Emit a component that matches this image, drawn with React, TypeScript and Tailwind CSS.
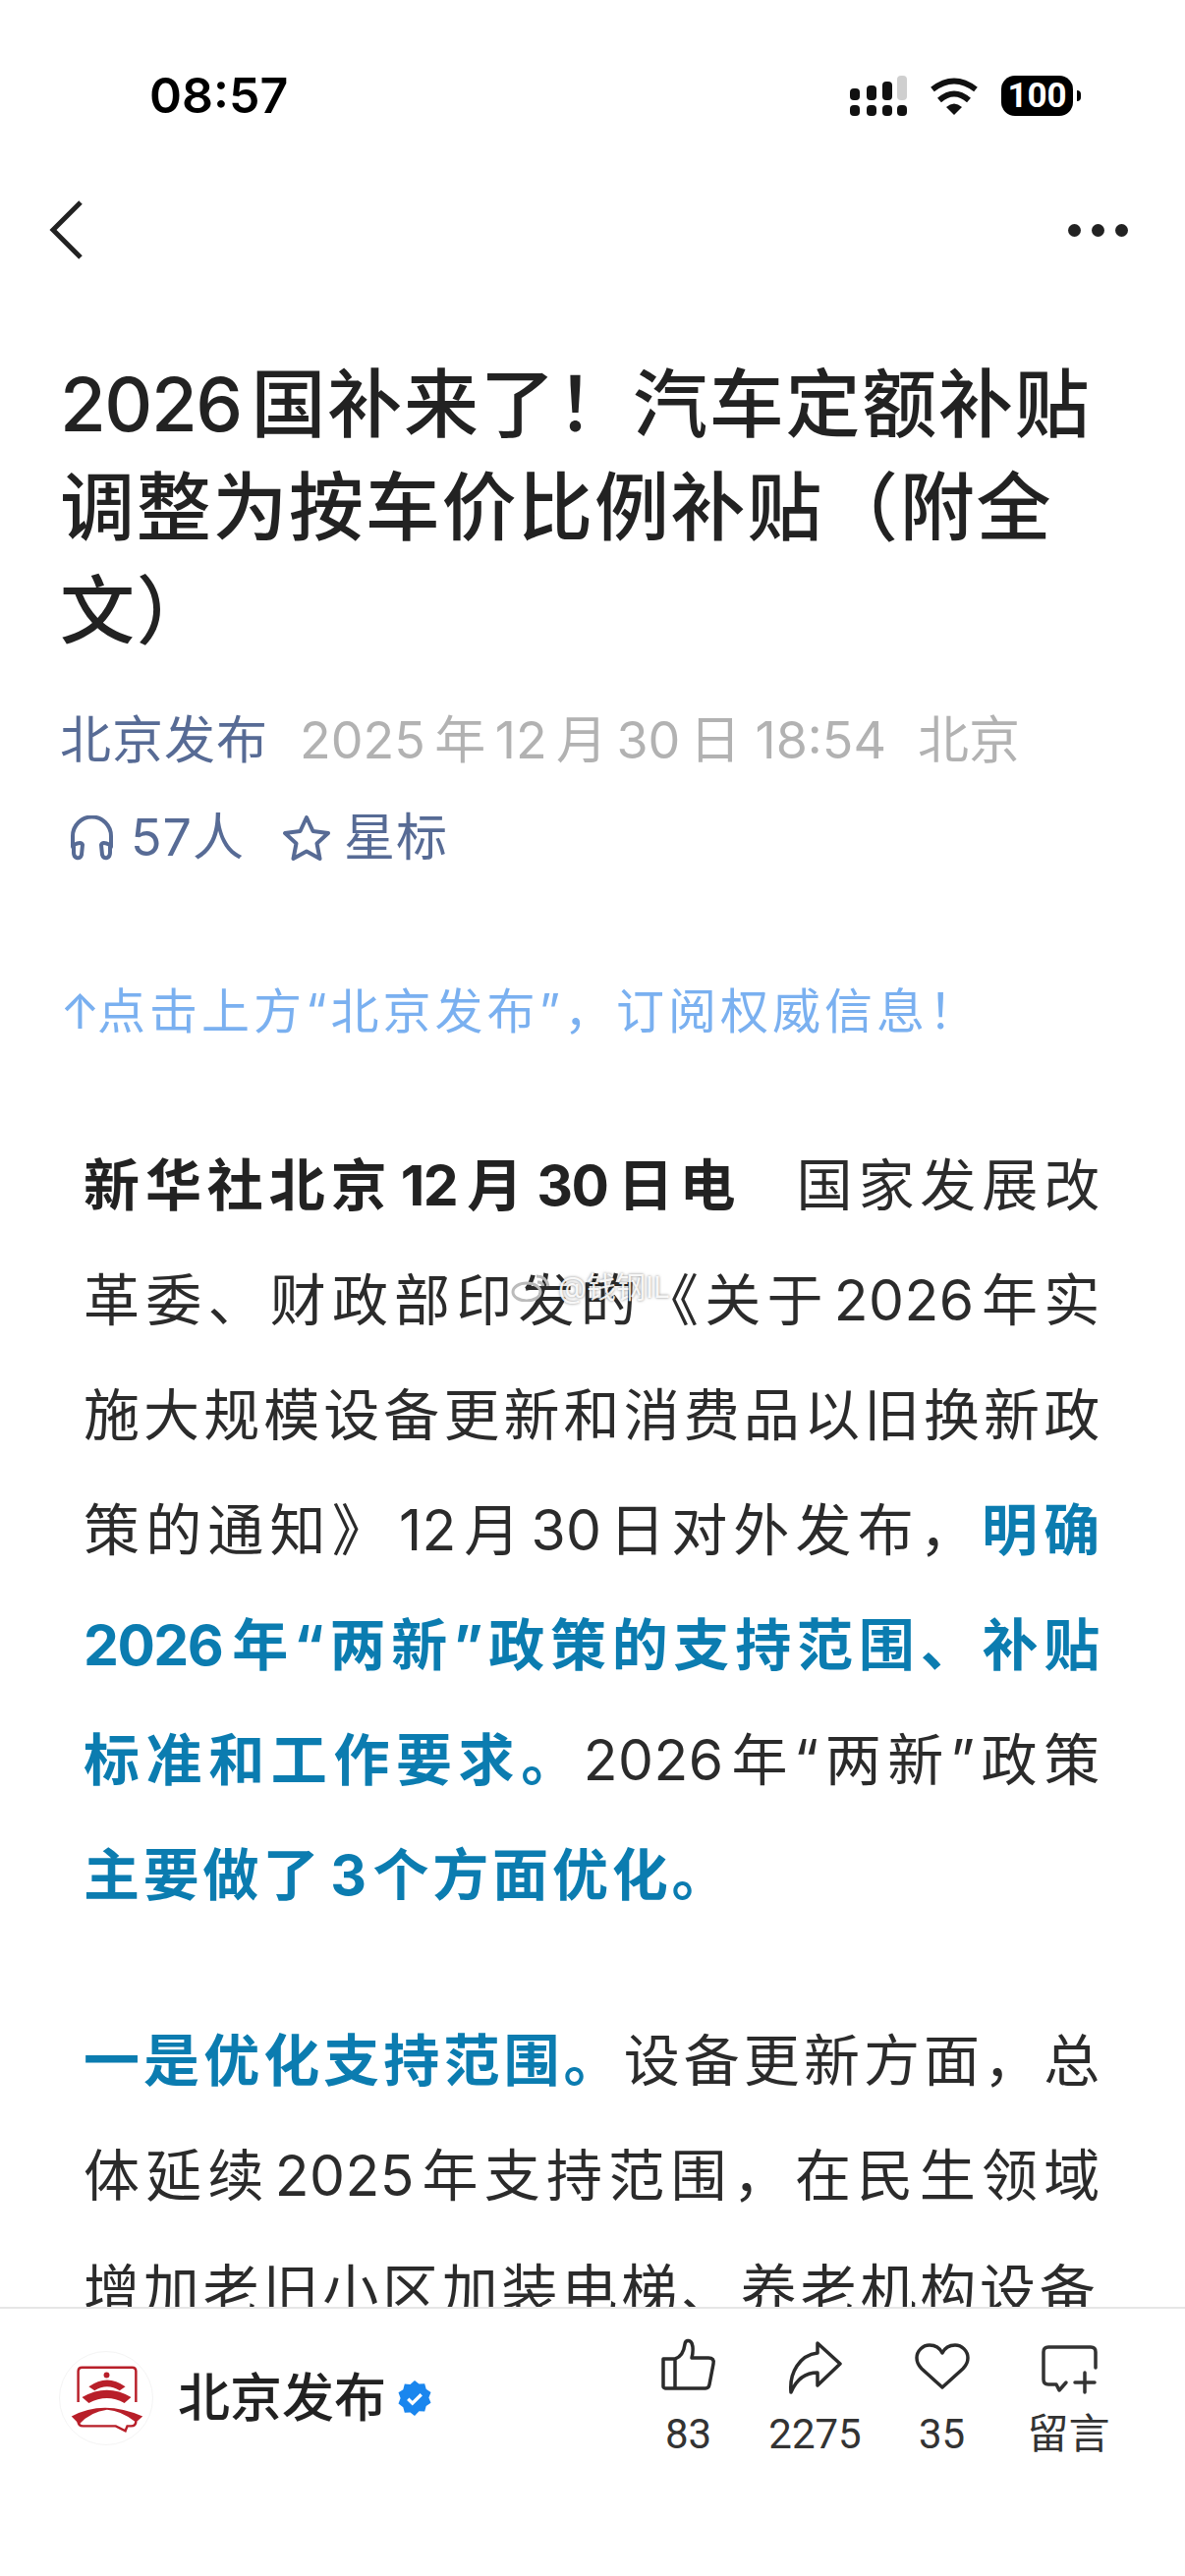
import React from "react";

const F = { fontFamily: '"Inter","Noto Sans CJK SC",sans-serif' };

function N({ children }: { children: React.ReactNode }) {
  return <span className="tracking-[0.500px] mx-[5px]">{children}</span>;
}
function B({ children }: { children: React.ReactNode }) {
  return <span className="tracking-[-1.500px] mx-[8px]">{children}</span>;
}

function Logo() {
  return (
    <div className="w-[96px] h-[96px] rounded-full border border-[#f4f4f4] shrink-0">
      <svg width="94" height="94" viewBox="0 0 96 96" fill="none">
        <path d="M19 52 V20 Q19 16 23 16 H75 Q79 16 79 20 V52" stroke="#b81f29" strokeWidth="2.500" />
        <path d="M19 72 Q19 77 24 77 H58 L68 82 L70 77 H74 Q79 77 79 72" stroke="#b81f29" strokeWidth="2.500" />
        <circle cx="48.500" cy="24" r="3" fill="#b81f29" />
        <path d="M30 36 Q49 22 68 36 L62 40 Q49 32 36 40 Z" fill="#b81f29" />
        <path d="M23 47 Q49 32 74 47 L67 53 Q49 43 30 53 Z" fill="#b81f29" />
        <path d="M12 67 Q45 49 86 67 L79 73 Q64 61 49 60 Q32 62 20 75 Z" fill="#b81f29" />
      </svg>
    </div>
  );
}

function Action({ icon, label }: { icon: React.ReactNode; label: string }) {
  return (
    <div className="w-[129px] flex flex-col items-center gap-[18px]">
      <div className="h-[60px] flex items-start justify-center">{icon}</div>
      <span className="text-[42px] leading-[44px] text-[#333]" style={{ fontFamily: '"Roboto","Noto Sans CJK SC",sans-serif' }}>{label}</span>
    </div>
  );
}

export default function App() {
  return (
    <div className="relative w-[1206px] h-[2622px] bg-white overflow-hidden flex flex-col text-[#222]" style={F}>
      <div className="h-[174px] shrink-0 flex items-start justify-between pl-[152px] pr-[106px] pt-[77px]">
        <span className="text-[50px] leading-[41px] font-semibold text-black">08:57</span>
        <div className="flex items-center h-[41px]">
          <svg width="58" height="41" viewBox="0 0 58 41" fill="#111">
            <rect x="0" y="13" width="10" height="12" rx="4" />
            <rect x="17" y="10" width="10" height="15" rx="4" />
            <rect x="33" y="6" width="10" height="19" rx="4" />
            <rect x="48" y="0" width="10" height="25" rx="4" fill="#cfcfcf" />
            <rect x="0" y="30" width="10" height="11" rx="4" />
            <rect x="17" y="30" width="10" height="11" rx="4" />
            <rect x="33" y="30" width="10" height="11" rx="4" />
            <rect x="48" y="30" width="10" height="11" rx="4" />
          </svg>
          <svg className="ml-[23px]" width="50" height="38" viewBox="0 0 50 38" fill="none" stroke="#111" strokeWidth="6">
            <path d="M3 12 Q25 -5 47 12" />
            <path d="M10 23 Q25 10 40 23" />
            <path d="M25 38 L17 30 Q25 23 33 30 Z" fill="#111" stroke="none" />
          </svg>
          <div className="ml-[23px] w-[73px] h-[41px] rounded-[14px] bg-black text-white text-[35px] leading-[41px] font-bold text-center" style={{ fontFamily: "Roboto,sans-serif" }}>100</div>
          <div className="ml-[4px] w-[4px] h-[11px] rounded-r-full bg-black" />
        </div>
      </div>

      <div className="h-[120px] shrink-0 flex items-center justify-between pl-[50px] pr-[58px]">
        <svg width="34" height="60" viewBox="0 0 34 60" fill="none" stroke="#222" strokeWidth="5">
          <path d="M32 2 L4 30 L32 58" />
        </svg>
        <div className="flex gap-[11px]">
          <span className="w-[13px] h-[13px] rounded-full bg-[#222]" />
          <span className="w-[13px] h-[13px] rounded-full bg-[#222]" />
          <span className="w-[13px] h-[13px] rounded-full bg-[#222]" />
        </div>
      </div>

      <div className="pl-[61px] pr-[62px] pt-[65px]">
        <h1 className="text-[76px] leading-[105px] font-medium tracking-[1.700px] text-[#222]"><span className="tracking-[-1.500px] mr-[10px]">2026</span>国补来了！汽车定额补贴调整为按车价比例补贴（附全文）</h1>
        <div className="mt-[50px] text-[52px] leading-[60px] flex gap-[32px] whitespace-nowrap">
          <span className="text-[#576b95] tracking-[1px]">北京发布</span>
          <span className="text-[#b2b2b2]">2025&thinsp;年&thinsp;12&thinsp;月&thinsp;30&thinsp;日 18:54</span>
          <span className="text-[#b2b2b2]">北京</span>
        </div>
        <div className="mt-[39px] flex items-center text-[52px] leading-[60px] text-[#576b95]">
          <svg className="ml-[10px]" width="45" height="46" viewBox="0 0 45 46" fill="none" stroke="#576b95" strokeWidth="4" strokeLinecap="round">
            <path d="M3 32 V21 A19.500 19.500 0 0 1 42 21 V32" />
            <path d="M4 30 Q12 26 13 30 L12 40 Q11 44 7 43 Q4 42 4 38 Z" />
            <path d="M41 30 Q33 26 32 30 L33 40 Q34 44 38 43 Q41 42 41 38 Z" />
          </svg>
          <span className="ml-[17px] tracking-[1px]">57人</span>
          <svg className="ml-[39px]" width="48" height="48" viewBox="0 0 48 48" fill="none" stroke="#576b95" strokeWidth="4" strokeLinejoin="round">
            <path d="M24 3 L30.500 17 L46 19 L34.500 29.500 L37.500 45 L24 37.500 L10.500 45 L13.500 29.500 L2 19 L17.500 17 Z" />
          </svg>
          <span className="ml-[14px] tracking-[1px]">星标</span>
        </div>
      </div>

      <div className="pl-[61px] mt-[117px] text-[49px] leading-[60px] tracking-[4px] text-[#7ab0f0] whitespace-nowrap"><span className="tracking-[-3px]">↑</span>点击上方“北京发布”，订阅权威信息！</div>

      <div className="flex-1 min-h-0 overflow-hidden pl-[85px] pr-[83px] mt-[88px] text-[57px] leading-[117px] tracking-[3.800px] text-[#2b2b2b] text-justify">
        <p className="mb-[72px]">
          <strong className="font-bold text-[#222]">新华社北京<B>12</B>月<B>30</B>日电</strong>
          <span className="ml-[56px]">国家发展改革委、财政部印发的《关于<N>2026</N>年实施大规模设备更新和消费品以旧换新政策的通知》<N>12</N>月<N>30</N>日对外发布，</span>
          <strong className="font-bold text-[#0b7cb0]">明确<span className="tracking-[-1.500px] mr-[8px]">2026</span>年“两新”政策的支持范围、补贴标准和工作要求。</strong>
          <span className="tracking-[0.500px] mr-[5px]">2026</span>年“两新”政策
          <strong className="font-bold text-[#0b7cb0]">主要做了<B>3</B>个方面优化。</strong>
        </p>
        <p>
          <strong className="font-bold text-[#0b7cb0]">一是优化支持范围。</strong>
          设备更新方面，总体延续<N>2025</N>年支持范围，在民生领域增加老旧小区加装电梯、养老机构设备
        </p>
      </div>

      <span className="absolute left-[520px] top-[1295px] flex items-end gap-[6px] text-[30px] leading-[30px] text-white/90 [text-shadow:0_0_3px_rgba(0,0,0,0.5)] pointer-events-none">
        <svg width="42" height="30" viewBox="0 0 42 30" fill="none" strokeWidth="3">
          <ellipse cx="16" cy="20" rx="14" ry="9" stroke="#bbb" />
          <path d="M26 4 Q36 4 38 14 M27 10 Q32 10 33 14" stroke="#bbb" />
        </svg>
        <span>@钱钢IL</span>
      </span>

      <div className="h-[274px] shrink-0 border-t-2 border-[#e6e6e6] bg-white flex items-start pl-[60px] pr-[54px] pt-[28px]">
        <div className="flex items-center mt-[15px]">
          <Logo />
          <span className="ml-[25px] text-[53px] leading-[70px] font-medium text-[#222]">北京发布</span>
          <svg className="ml-[11px]" width="36" height="36" viewBox="0 0 24 24">
            <path d="M12 0l3 2.400 3.800-.2 1 3.700 3.200 2.100-1.400 3.600 1.400 3.600-3.200 2.100-1 3.700-3.800-.2L12 24l-3-2.400-3.800.2-1-3.700L1 15.600 2.400 12 1 8.200l3.200-2.100 1-3.700 3.800.2z" fill="#1a86ee" />
            <path d="M7.500 12.500l3 3 6-6" stroke="#fff" strokeWidth="2.200" fill="none" />
          </svg>
        </div>
        <div className="ml-auto flex">
          <Action label="83" icon={
            <svg className="mt-[2px]" width="56" height="54" viewBox="0 0 56 54" fill="none" stroke="#2b2b2b" strokeWidth="3.500" strokeLinejoin="round">
              <path d="M2 21 H14 C20 19 23 14 24 6 C24.500 2 29 1 31 5 C33 10 32 16 31 20 H48 C52 20 54 22 53 26 L49 47 C48.500 50 47 51 45 51 H4 C3 51 2 50 2 49 Z M14 21 V51" />
            </svg>
          } />
          <Action label="2275" icon={
            <svg className="mt-[5px]" width="56" height="54" viewBox="0 0 56 54" fill="none" stroke="#2b2b2b" strokeWidth="3.500" strokeLinejoin="round">
              <path d="M30 2 L53 23 L30 45 V32 C17 32 8 40 3 52 C1 32 12 14 30 12 Z" />
            </svg>
          } />
          <Action label="35" icon={
            <svg className="mt-[7px]" width="56" height="47" viewBox="0 0 56 47" fill="none" stroke="#2b2b2b" strokeWidth="3.500" strokeLinejoin="round">
              <path d="M28 10 C25 4 20 2 15 2 C8 2 2 8 2 15 C2 19 4 23 7 26 L28 45 L49 26 C52 23 54 19 54 15 C54 8 48 2 41 2 C36 2 31 4 28 10 Z" />
            </svg>
          } />
          <Action label="留言" icon={
            <svg className="mt-[9px] ml-[2px]" width="57" height="50" viewBox="0 0 57 50" fill="none" stroke="#333" strokeWidth="3.500" strokeLinecap="round" strokeLinejoin="round">
              <path d="M55 23 V7 Q55 2 50 2 H7 Q2 2 2 7 V35 Q2 40 7 40 H15 L18 46 L25 38" />
              <path d="M34 38 H54 M44 28 V48" />
            </svg>
          } />
        </div>
      </div>
    </div>
  );
}
